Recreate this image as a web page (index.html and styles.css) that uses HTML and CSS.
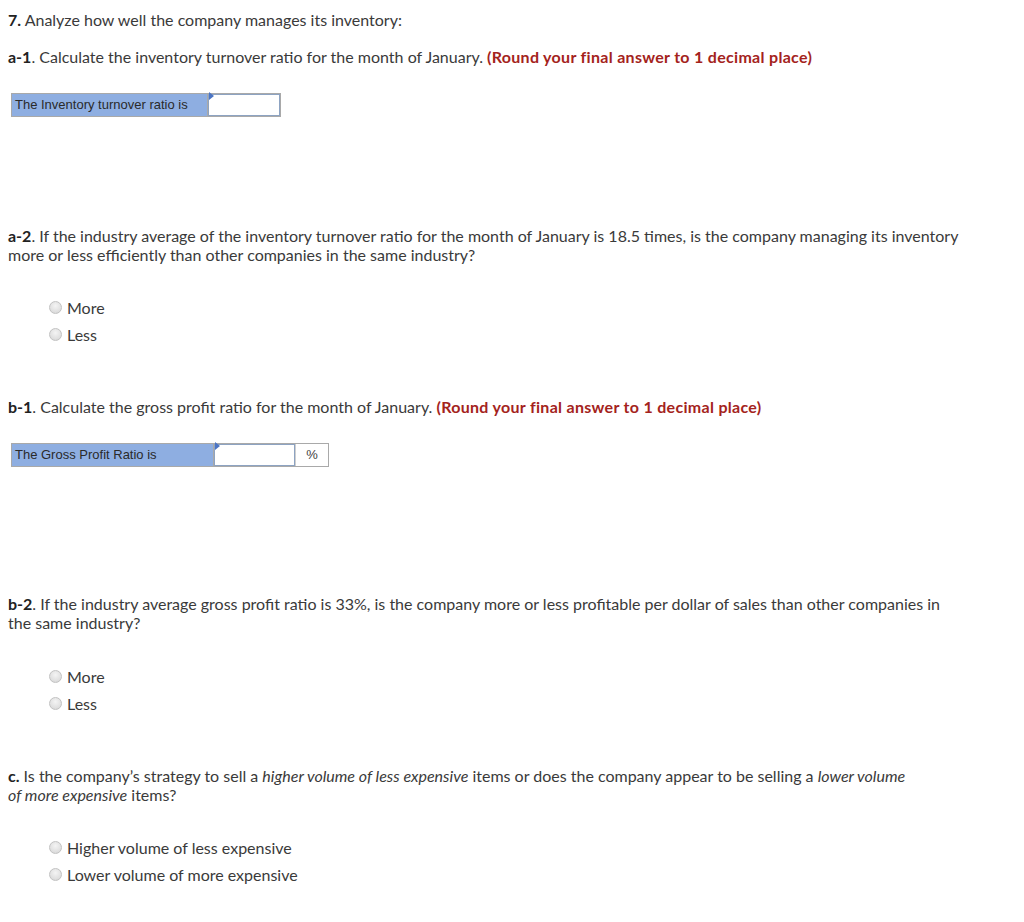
FILE: index.html
```html
<!DOCTYPE html>
<html>
<head>
<meta charset="utf-8">
<link rel="stylesheet" href="styles.css">
</head>
<body>
<div class="page">
  <p class="q title"><b>7.</b> Analyze how well the company manages its inventory:</p>
  <p class="q a1"><b>a-1</b>. Calculate the inventory turnover ratio for the month of January. <strong class="hint">(Round your final answer to 1 decimal place)</strong></p>
  <div class="ans ans1">
    <div class="lbl lbl1">The Inventory turnover ratio is</div>
    <div class="inp inp1"><span class="flag"></span></div>
  </div>
  <p class="q a2"><b>a-2</b>. If the industry average of the inventory turnover ratio for the month of January is 18.5 times, is the company managing its inventory more or less efficiently than other companies in the same industry?</p>
  <ul class="opts opts1">
    <li><span class="radio"></span>More</li>
    <li><span class="radio"></span>Less</li>
  </ul>
  <p class="q b1"><b>b-1</b>. Calculate the gross profit ratio for the month of January. <strong class="hint">(Round your final answer to 1 decimal place)</strong></p>
  <div class="ans ans2">
    <div class="lbl lbl2">The Gross Profit Ratio is</div>
    <div class="inp inp2"><span class="flag"></span></div>
    <div class="unit">%</div>
  </div>
  <p class="q b2"><b>b-2</b>. If the industry average gross profit ratio is 33%, is the company more or less profitable per dollar of sales than other companies in the same industry?</p>
  <ul class="opts opts2">
    <li><span class="radio"></span>More</li>
    <li><span class="radio"></span>Less</li>
  </ul>
  <p class="q c"><b>c.</b> Is the company’s strategy to sell a <i>higher volume of less expensive</i> items or does the company appear to be selling a <i>lower volume</i><br><i>of more expensive</i> items?</p>
  <ul class="opts opts3">
    <li><span class="radio"></span>Higher volume of less expensive</li>
    <li><span class="radio"></span>Lower volume of more expensive</li>
  </ul>
</div>
</body>
</html>
```
FILE: styles.css
```css
html, body {
  margin: 0;
  padding: 0;
  background: #fff;
}
.page {
  padding: 0 62px 0 8px;
  font-family: Lato, "Open Sans", sans-serif;
  font-size: 16px;
  line-height: 19px;
  color: #3a3a3a;
  display: flow-root;
}
.q {
  margin: 0;
}
.q b {
  font-weight: 700;
  color: #222;
}
.hint {
  color: #a4231c;
  font-weight: 700;
  letter-spacing: 0.3px;
}
.title { margin-top: 10px; }
.a1 { margin-top: 17.5px; }
.ans {
  display: flex;
  margin-left: 3px;
  margin-top: 27.5px;
  height: 22px;
  border: 1px solid #a9a9a9;
  font-family: "Liberation Sans", Arial, sans-serif;
  font-size: 13px;
  line-height: 22px;
  color: #2a2a2a;
}
.ans1 { width: 268px; }
.ans2 { width: 316px; }
.lbl {
  background: #8eaee1;
  padding-left: 3px;
  border-right: 1px solid #a9a9a9;
}
.lbl1 { width: 192px; }
.lbl2 { width: 198px; }
.inp {
  position: relative;
  background: #fff;
  border: 1px solid #8da3c2;
  box-sizing: border-box;
}
.inp1 { width: 72px; }
.inp2 { width: 81px; }
.flag {
  position: absolute;
  left: 0;
  top: -3px;
  width: 0;
  height: 0;
  border-top: 4px solid transparent;
  border-bottom: 4px solid transparent;
  border-left: 5px solid #4a74c4;
}
.unit {
  flex: 1;
  text-align: center;
  background: #fff;
  border-left: 1px solid #cfcfcf;
  color: #444;
}
.a2 { margin-top: 108.5px; }
.opts {
  list-style: none;
  margin: 0;
  padding: 0 0 0 41px;
}
.opts li {
  display: flex;
  align-items: center;
  height: 19px;
}
.opts li + li { margin-top: 8px; }
.radio {
  display: inline-block;
  width: 11px;
  height: 11px;
  border-radius: 50%;
  border: 1px solid #c2c2c2;
  background: radial-gradient(circle at 50% 35%, #f4f4f4 0%, #dedede 70%, #cfcfcf 100%);
  margin-right: 5px;
  flex: none;
}
.opts1 { margin-top: 34px; }
.b1 { margin-top: 53px; }
.b2 { margin-top: 126.5px; }
.opts2 { margin-top: 35px; }
.c { margin-top: 53px; }
.c i { font-style: italic; }
.opts3 { margin-top: 34px; }
```
